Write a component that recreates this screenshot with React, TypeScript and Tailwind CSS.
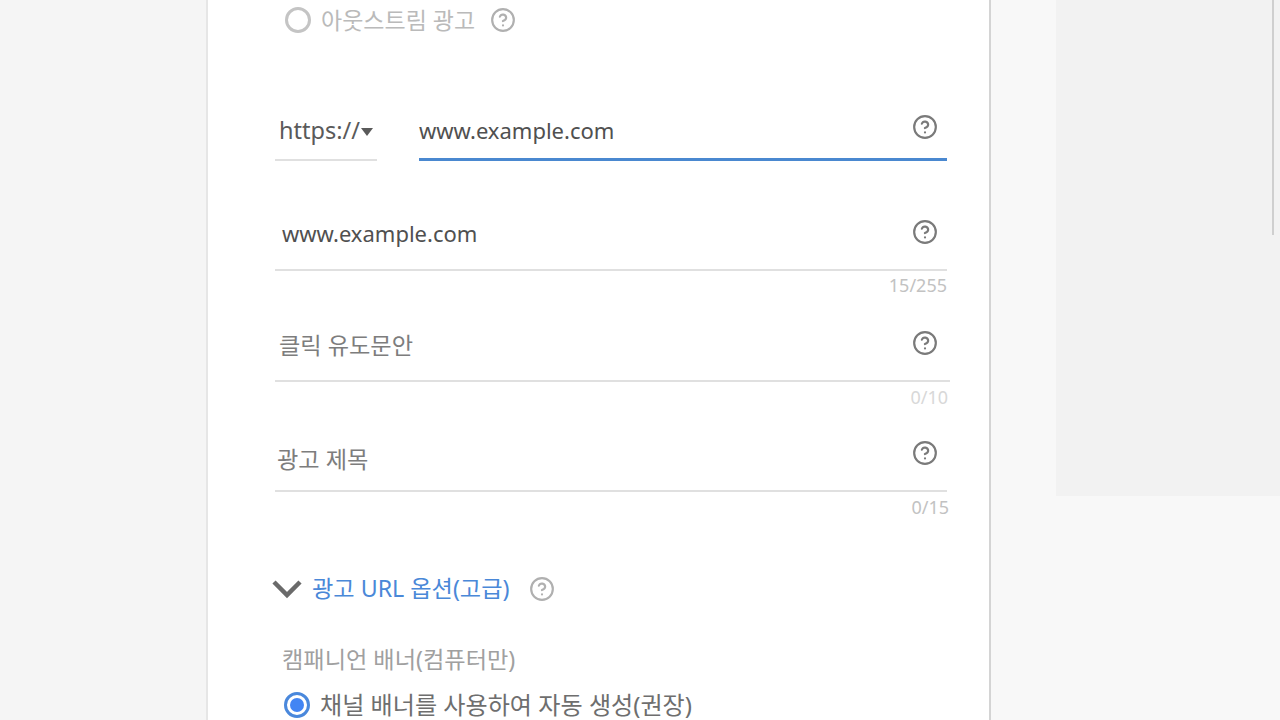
import { CircleHelp } from 'lucide-react';

const FONT = "font-['Noto_Sans','Noto_Sans_CJK_KR',sans-serif]";

function Help({ muted = false }: { muted?: boolean }) {
  return <CircleHelp size={26} strokeWidth={2} className={muted ? 'text-[#b0b0b0]' : 'text-[#7a7a7a]'} />;
}

function Radio({ checked = false }: { checked?: boolean }) {
  if (checked) {
    return (
      <span className="flex h-[26px] w-[26px] items-center justify-center rounded-full border-[3px] border-[#4a88dc]">
        <span className="h-[14px] w-[14px] rounded-full bg-[#4285f4]" />
      </span>
    );
  }
  return <span className="h-[26px] w-[26px] rounded-full border-[3px] border-[#c4c4c4]" />;
}

export default function App() {
  return (
    <div className={`flex h-[720px] overflow-hidden bg-[#f7f7f7] ${FONT}`}>
      {/* Left gutter */}
      <div className="w-[206px] shrink-0 bg-[#f5f5f5]" />

      {/* Form card */}
      <main className="w-[785px] shrink-0 border-x-2 border-r-[#d4d4d4] border-l-[#e6e6e6] bg-white pl-[67px]">
        <div className="flex h-[40px] items-center pl-[10px] text-[#bababa]">
          <Radio />
          <span className="ml-[10px] text-[23px]">아웃스트림 광고</span>
          <span className="ml-[15px] flex"><Help muted /></span>
        </div>

        {/* Protocol + domain */}
        <div className="mt-[70px] flex w-[672px]">
          <div className="flex h-[51px] w-[102px] items-center border-b-2 border-[#e0e0e0] pb-[8px] pl-[4px] text-[23.5px] text-[#5a5a5a]">
            https://
            <span className="mt-[3px] ml-[1px] h-0 w-0 border-x-[6px] border-t-[8px] border-x-transparent border-t-[#5a5a5a]" />
          </div>
          <div className="ml-[42px] flex h-[51px] flex-1 items-center justify-between border-b-[3px] border-[#4a88d0] pb-[7px] text-[22px] text-[#505050]">
            www.example.com
            <span className="mr-[9px] mb-[8px] flex"><Help /></span>
          </div>
        </div>

        <div className="mt-[58px] flex h-[52px] w-[672px] items-center justify-between border-b-2 border-[#e0e0e0] pb-[22px] pl-[7px] text-[22px] text-[#505050]">
          www.example.com
          <span className="mr-[9px] mb-[2px] flex"><Help /></span>
        </div>
        <p className="mt-[2px] w-[672px] text-right text-[18px] leading-[24px] text-[#c2c2c2]">15/255</p>

        <div className="mt-[26px] flex h-[59px] w-[675px] items-center justify-between border-b-2 border-[#e0e0e0] pb-[12px] pl-[4px] text-[23.2px] text-[#7d7d7d]">
          클릭 유도문안
          <span className="mr-[12px] mb-[6px] flex"><Help /></span>
        </div>
        <p className="mt-[3px] w-[673px] text-right text-[18px] leading-[24px] text-[#d8d8d8]">0/10</p>

        <div className="mt-[25px] flex h-[58px] w-[672px] items-center justify-between border-b-2 border-[#e0e0e0] pb-[5px] pl-[2px] text-[23.2px] text-[#7d7d7d]">
          광고 제목
          <span className="mr-[9px] mb-[14px] flex"><Help /></span>
        </div>
        <p className="mt-[3px] w-[674px] text-right text-[18px] leading-[24px] text-[#c2c2c2]">0/15</p>

        {/* Advanced URL options */}
        <div className="mt-[50px] flex h-[40px] items-center text-[23.2px] text-[#4a88d8]">
          <svg width="30" height="20" viewBox="0 0 30 20" fill="none" stroke="#6a6a6a" strokeWidth="4.5" className="-ml-[3px]">
            <path d="M2 3l13 13L28 3" />
          </svg>
          <span className="ml-[10px] -translate-y-px">광고 URL 옵션(고급)</span>
          <span className="ml-[19px] flex"><Help muted /></span>
        </div>

        <p className="mt-[34px] pl-[7px] text-[23.2px] leading-[32px] text-[#a0a0a0]">캠패니언 배너(컴퓨터만)</p>

        <div className="mt-[14px] flex h-[32px] items-center pl-[9px] text-[24.1px] text-[#6e6e6e]">
          <Radio checked />
          <span className="ml-[10px]">채널 배너를 사용하여 자동 생성(권장)</span>
        </div>
      </main>

      {/* Preview column */}
      <aside className="relative flex-1 bg-[#f8f8f8] pl-[65px]">
        <div className="h-[496px] bg-[#f2f2f2]" />
        <span className="absolute top-0 right-[6px] h-[235px] w-[2px] bg-[#cfcfcf]" />
      </aside>
    </div>
  );
}
